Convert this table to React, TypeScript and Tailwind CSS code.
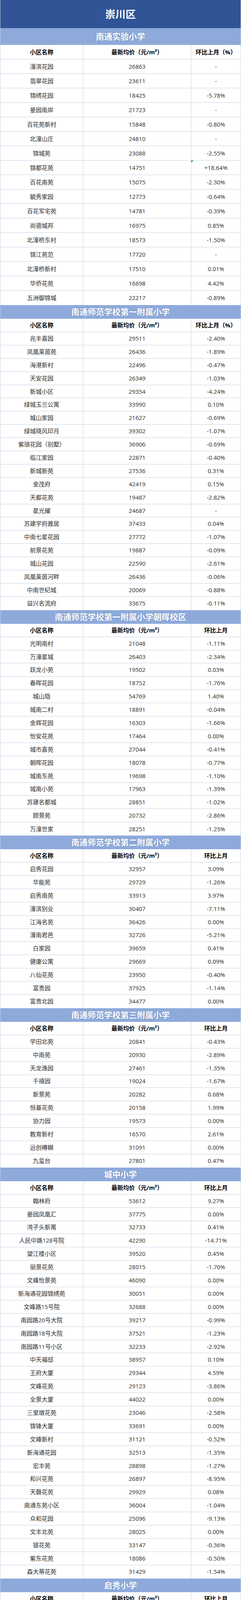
type Row = [string, string, string];

type Section = {
  title: string;
  pct: boolean;
  first?: boolean;
  rows: Row[];
};

const sections: Section[] = [
  {
    title: "南通实验小学",
    pct: true,
    first: true,
    rows: [
      ["濠滨花园", "26863", "-"],
      ["翡翠花园", "23611", "-"],
      ["锦绣花园", "18425", "-5.78%"],
      ["晏园南岸", "21723", "-"],
      ["百花苑新村", "15848", "-0.80%"],
      ["北濠山庄", "24810", "-"],
      ["锦城苑", "23088", "-2.55%"],
      ["锦都花苑", "14751", "+18.64%"],
      ["百花南苑", "15075", "-2.30%"],
      ["毓秀家园", "12773", "-0.64%"],
      ["百花军宅苑", "14781", "-0.39%"],
      ["尚德城邦", "16975", "0.85%"],
      ["北濠桥东村", "18573", "-1.50%"],
      ["锦江苑范", "17720", "-"],
      ["北濠桥新村", "17510", "0.01%"],
      ["华侨花苑", "16698", "4.42%"],
      ["五洲御锦城", "22217", "-0.89%"],
    ],
  },
  {
    title: "南通师范学校第一附属小学",
    pct: true,
    rows: [
      ["兆丰嘉园", "29511", "-2.40%"],
      ["凤凰莱茵苑", "26436", "-1.89%"],
      ["海港新村", "22496", "-0.47%"],
      ["天安花园", "26349", "-1.03%"],
      ["新城小区", "29354", "-4.24%"],
      ["绿城玉兰公寓", "33990", "0.10%"],
      ["城山家园", "21627", "-0.69%"],
      ["绿城晓风印月", "39302", "-1.07%"],
      ["紫琅花园（别墅）", "36906", "-0.69%"],
      ["临江家园", "22871", "-0.40%"],
      ["新城新苑", "27536", "0.31%"],
      ["金茂府", "42419", "0.15%"],
      ["天都花苑", "19487", "-2.82%"],
      ["星光耀", "24687", "-"],
      ["苏建学府雅居", "37433", "0.04%"],
      ["中南七星花园", "27772", "-1.07%"],
      ["前景花苑", "19887", "-0.09%"],
      ["城山花园", "22590", "-2.61%"],
      ["凤凰莱茵河畔", "26436", "-0.06%"],
      ["中南世纪城", "20069", "-0.88%"],
      ["益兴名流府", "33675", "-0.11%"],
    ],
  },
  {
    title: "南通师范学校第一附属小学朝晖校区",
    pct: false,
    rows: [
      ["光明南村", "21048", "-1.11%"],
      ["万濠星城", "26403", "-2.34%"],
      ["跃龙小苑", "19502", "0.03%"],
      ["春晖花园", "18752", "-1.76%"],
      ["城山隐", "54769", "1.40%"],
      ["城南二村", "18891", "-0.04%"],
      ["金辉花园", "16303", "-1.66%"],
      ["怡安花苑", "17464", "0.00%"],
      ["城市嘉苑", "27044", "-0.41%"],
      ["朝晖花园", "18078", "-0.77%"],
      ["城南东苑", "19698", "-1.10%"],
      ["城南小苑", "17963", "-1.39%"],
      ["苏建名都城", "28851", "-1.02%"],
      ["颐景苑", "20732", "-2.86%"],
      ["万濠世家", "28251", "-1.25%"],
    ],
  },
  {
    title: "南通师范学校第二附属小学",
    pct: false,
    rows: [
      ["启秀花园", "32957", "3.09%"],
      ["华能苑", "29729", "-1.26%"],
      ["启秀南苑", "33913", "3.97%"],
      ["濠滨别业", "30407", "-7.11%"],
      ["江海名苑", "36426", "0.00%"],
      ["濠南君邑", "32726", "-5.21%"],
      ["白家园", "39659", "0.41%"],
      ["健康公寓", "29669", "0.09%"],
      ["八仙花苑", "23950", "-0.40%"],
      ["富贵园", "37925", "-1.14%"],
      ["富贵北园", "34477", "0.00%"],
    ],
  },
  {
    title: "南通师范学校第三附属小学",
    pct: false,
    rows: [
      ["学田北苑", "20841", "-0.43%"],
      ["中南苑", "20930", "-2.89%"],
      ["天龙逸园", "27461", "-1.35%"],
      ["千禧园", "19024", "-1.67%"],
      ["新景苑", "20282", "0.68%"],
      ["恒基花苑", "20158", "1.99%"],
      ["协力园", "19573", "0.00%"],
      ["教育新村", "16570", "2.61%"],
      ["远创樽樾", "31091", "0.00%"],
      ["九玺台", "27801", "0.47%"],
    ],
  },
  {
    title: "城中小学",
    pct: false,
    rows: [
      ["翰林府", "53612", "9.27%"],
      ["晏园凤凰汇", "37775", "0.00%"],
      ["湾子头新寓", "32733", "0.41%"],
      ["人民中路128号院", "42290", "-14.71%"],
      ["望江楼小区", "39520", "0.45%"],
      ["丽景花苑", "28015", "-1.70%"],
      ["文峰怡景苑", "46090", "0.00%"],
      ["新海通花园锦绣苑", "30051", "0.00%"],
      ["文峰路15号院", "32688", "0.00%"],
      ["南园路20号大院", "39217", "-0.99%"],
      ["南园路18号大院", "37521", "-1.23%"],
      ["南园路11号小区", "32233", "-2.92%"],
      ["中天福邸", "38957", "0.10%"],
      ["王府大厦", "29344", "4.59%"],
      ["文峰花苑", "29123", "-3.86%"],
      ["全景大厦", "44022", "0.00%"],
      ["三里墩花苑", "23046", "-2.58%"],
      ["锦锋大厦", "33691", "0.00%"],
      ["文峰新村", "31121", "-0.52%"],
      ["新海通花园", "32513", "-1.35%"],
      ["宏丰苑", "28898", "-1.27%"],
      ["和兴花苑", "26897", "-8.95%"],
      ["天磬花苑", "29929", "0.08%"],
      ["南通东苑小区", "36004", "-1.04%"],
      ["众和花园", "25096", "-9.13%"],
      ["文丰北苑", "28025", "0.00%"],
      ["银花苑", "33147", "-0.36%"],
      ["紫东花苑", "18086", "-0.50%"],
      ["森大蒂花苑", "31429", "-1.54%"],
    ],
  },
  {
    title: "启秀小学",
    pct: false,
    rows: [
      ["学士府", "18335", "-1.41%"],
      ["恒盛尚海湾", "24247", "-0.59%"],
      ["易家桥新村", "17601", "-1.74%"],
      ["金鑫苑", "20253", "-0.37%"],
      ["通明花苑", "21181", "0.00%"],
      ["锦安花园", "21080", "-0.19%"],
      ["南川园新村", "18002", "-1.57%"],
      ["中海铂樾府", "34404", "-1.78%"],
      ["紫东南苑", "20064", "-2.13%"],
      ["悦海名邸", "23882", "-2.34%"],
      ["华雅苑", "19478", "0.32%"],
      ["圆融公馆", "34133", "7.64%"],
    ],
  },
  {
    title: "文亮小学",
    pct: false,
    rows: [
      ["德民旺角", "20560", "0.53%"],
      ["盛和花半里", "20465", "0.07%"],
      ["东大城市花园", "20386", "-0.93%"],
      ["晏园玖珑城", "19086", "-0.59%"],
      ["板桥南村", "15745", "-0.34%"],
      ["板桥东村", "15430", "0.54%"],
      ["新东方花苑", "21839", "-0.27%"],
      ["金飞达名郡", "20988", "-0.02%"],
      ["小石桥花苑", "15147", "-2.22%"],
      ["天虹花园", "17294", "-1.40%"],
      ["天勤家园", "16020", "-1.84%"],
      ["金龙花苑", "16733", "-2.20%"],
      ["天润家园", "17360", "-4.57%"],
      ["新桥新村", "19707", "0.00%"],
      ["龙王桥新村", "18128", "1.63%"],
    ],
  },
  {
    title: "五山小学",
    pct: false,
    rows: [
      ["紫琅新村", "15603", "0.04%"],
      ["滨江花园", "15164", "-2.39%"],
      ["九间堂山居", "33734", "0.00%"],
      ["五山新苑", "17374", "-1.50%"],
      ["新港花苑", "16613", "-2.84%"],
      ["五山公寓", "13738", "-3.49%"],
      ["南通壹城水清木华", "32865", "0.00%"],
      ["旭日山庄", "46528", "-1.08%"],
      ["博园岚郡", "30591", "-1.84%"],
      ["五山花苑", "14134", "-3.22%"],
      ["五山家园", "14134", "-17.60%"],
    ],
  },
  {
    title: "跃龙桥小学",
    pct: false,
    rows: [
      ["万濠华府", "26734", "0.75%"],
      ["金鼎湾花园", "29871", "0.89%"],
      ["万科濠河传奇", "26086", "-3.48%"],
      ["四季绿苑", "21917", "0.64%"],
      ["景华城", "18643", "-0.45%"],
      ["将军二园", "15982", "-0.21%"],
      ["起凤园", "14521", "-2.17%"],
      ["友谊公寓", "23013", "-12.95%"],
      ["濠河经典苑", "29831", "0.93%"],
      ["濠河名邸", "37777", "20.14%"],
      ["财茂园", "19169", "0.67%"],
      ["七彩豪庭", "28028", "0.92%"],
      ["莘园路新村", "24264", "-0.51%"],
      ["新建路新村", "21094", "-1.51%"],
      ["解放新村", "24999", "-6.73%"],
      ["青年路新村", "27152", "0.05%"],
      ["佳成花苑", "18602", "0.27%"],
      ["新桃园", "25584", "-0.52%"],
      ["都市华城", "19349", "-0.67%"],
      ["朱家园", "30573", "8.15%"],
      ["天润锦园", "25653", "-3.78%"],
      ["任港路新村", "26565", "0.00%"],
      ["花园角", "15813", "-1.29%"],
      ["鸿运城市花苑", "17279", "0.72%"],
      ["将军一园", "15195", "-4.85%"],
      ["绿苑小区", "15202", "0.00%"],
    ],
  },
  {
    title: "南通市崇川学校",
    pct: false,
    rows: [
      ["德诚翰景园", "18515", "-1.39%"],
      ["冠城大通棕榈湾", "19462", "-1.35%"],
      ["文华名邸", "17293", "-0.29%"],
      ["书院坊", "15398", "-1.33%"],
      ["观河华府", "14710", "-0.75%"],
      ["中桥名邸", "15123", "-1.83%"],
      ["新胜花苑", "10901", "-3.90%"],
      ["天山花苑", "11555", "-5.47%"],
      ["兴石花园", "14061", "-1.07%"],
    ],
  },
  {
    title: "南通市崇川学校同和校区",
    pct: false,
    rows: [
      ["景河苑", "16439", "-0.55%"],
      ["恒盛豪庭", "17254", "-0.62%"],
      ["同和嘉苑", "15850", "-1.48%"],
      ["东晖花园", "16184", "-0.74%"],
      ["运杰龙磬园", "19981", "-2.38%"],
      ["滨河东城", "12685", "-0.56%"],
      ["东城花园", "13289", "0.08%"],
      ["万科城市之光", "22944", "-1.50%"],
      ["佳期漫", "23331", "-1.57%"],
    ],
  },
];

const font = "font-['Open_Sans','Noto_Sans_CJK_SC',sans-serif]";

function SectionTable({ s }: { s: Section }) {
  const rowH = s.first ? "h-[37px]" : "h-[33.9px]";
  return (
    <div className="flex flex-col">
      {/* school band */}
      <div
        className={`${s.first ? "h-[43px]" : "h-[35px]"} shrink-0 overflow-hidden bg-[#8eaadb] flex items-center justify-center text-[21px] leading-none font-bold text-white [text-shadow:0_0_2px_rgba(40,60,110,0.45)]`}
      >
        {s.title}
      </div>

      {/* column headers */}
      <div
        className={`grid grid-cols-[212px_276px_1fr] ${s.first ? "h-[37px]" : "h-[34px]"} shrink-0 overflow-hidden border-b border-[#c8d0e2] text-[15px] leading-none font-bold text-black`}
      >
        <div className="flex items-center justify-center border-r border-[#c8d0e2]">小区名称</div>
        <div className="flex items-center justify-center border-r border-[#c8d0e2]">最新均价（元/m²）</div>
        <div className="flex items-center justify-center">{s.pct ? "环比上月（%）" : "环比上月"}</div>
      </div>

      {s.rows.map((r, i) => (
        <div
          key={i}
          className={`grid grid-cols-[212px_276px_1fr] ${rowH} shrink-0 overflow-hidden ${i < s.rows.length - 1 ? "border-b" : ""} border-[#c8d0e2] text-[15px] leading-none text-[#2b2b2b]`}
        >
          <div className="flex items-center justify-center border-r border-[#c8d0e2] whitespace-nowrap">{r[0]}</div>
          <div className="flex items-center justify-center border-r border-[#c8d0e2]">{r[1]}</div>
          <div className="relative flex items-center justify-center">
            {r[2].startsWith("+") && (
              <span className="absolute left-0 top-0 w-0 h-0 border-t-[5px] border-r-[5px] border-t-[#138a13] border-r-transparent" />
            )}
            {r[2]}
          </div>
        </div>
      ))}
    </div>
  );
}

export default function App() {
  return (
    <div className={`w-[616px] bg-white border-x border-[#c8d0e2] ${font}`}>
      <div className="h-[72px] bg-[#305496] flex items-center justify-center text-[26px] leading-none font-bold text-white">
        崇川区
      </div>
      {sections.map((s) => (
        <SectionTable key={s.title} s={s} />
      ))}
    </div>
  );
}
